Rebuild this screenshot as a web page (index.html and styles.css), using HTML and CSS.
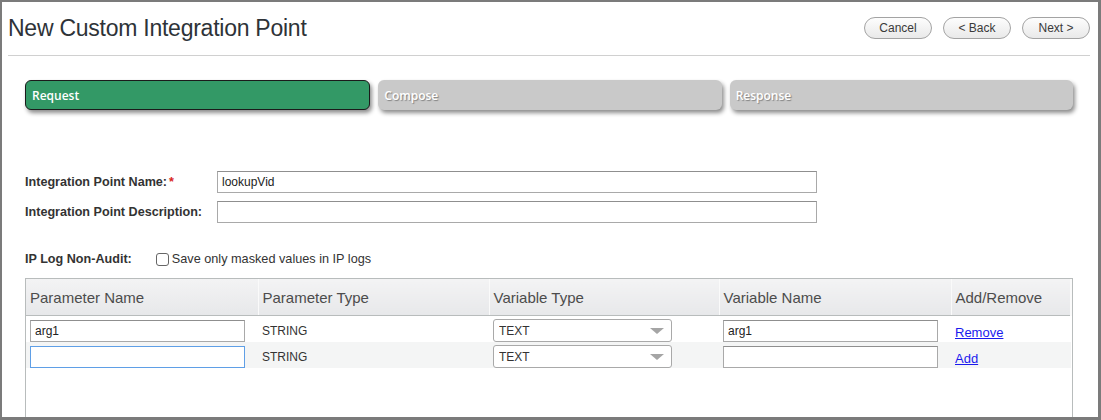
FILE: index.html
```html
<!DOCTYPE html>
<html>

<head>
  <title>New Custom Integration Point</title>
  <link rel="stylesheet" href="styles.css">
</head>

<body>
  <div class="frame">
    <header class="page-head">
      <h1>New Custom Integration Point</h1>
      <div class="actions">
        <button class="pill">Cancel</button>
        <button class="pill">&lt; Back</button>
        <button class="pill">Next &gt;</button>
      </div>
    </header>

    <div class="content">
      <ol class="steps">
        <li class="step current">Request</li>
        <li class="step">Compose</li>
        <li class="step">Response</li>
      </ol>

      <div class="form">
        <div class="field">
          <label>Integration Point Name:<span class="req">*</span></label>
          <input class="text wide" value="lookupVid">
        </div>
        <div class="field">
          <label>Integration Point Description:</label>
          <input class="text wide">
        </div>
        <div class="field audit">
          <label class="short">IP Log Non-Audit:</label>
          <input type="checkbox" class="check" id="masked">
          <label class="plain" for="masked">Save only masked values in IP logs</label>
        </div>
      </div>

      <div class="grid-wrap">
        <table class="params">
          <colgroup>
            <col style="width: 232px">
            <col style="width: 231px">
            <col style="width: 230px">
            <col style="width: 232px">
            <col>
          </colgroup>
          <thead>
            <tr>
              <th>Parameter Name</th>
              <th>Parameter Type</th>
              <th>Variable Type</th>
              <th>Variable Name</th>
              <th>Add/Remove</th>
            </tr>
          </thead>
          <tbody>
            <tr>
              <td><input class="text cell-input" value="arg1"></td>
              <td>STRING</td>
              <td class="select-cell">
                <div class="select"><select><option>TEXT</option></select></div>
              </td>
              <td><input class="text cell-input" value="arg1"></td>
              <td class="link-cell"><a href="#">Remove</a></td>
            </tr>
            <tr class="alt">
              <td><input class="text cell-input focused"></td>
              <td>STRING</td>
              <td class="select-cell">
                <div class="select"><select><option>TEXT</option></select></div>
              </td>
              <td><input class="text cell-input"></td>
              <td class="link-cell"><a href="#">Add</a></td>
            </tr>
          </tbody>
        </table>
      </div>
    </div>
  </div>
</body>

</html>
```

FILE: styles.css
```css
html,
body {
  margin: 0;
  height: 100%;
  background: #fff;
}

body {
  font: 12px "Liberation Sans", Arial, sans-serif;
  color: #333;
}

.frame {
  box-sizing: border-box;
  height: 420px;
  border: 2px solid #7b7b7b;
  border-right-width: 3px;
  border-bottom-width: 3px;
  overflow: hidden;
}

/* title bar */

.page-head {
  display: flex;
  align-items: center;
  justify-content: space-between;
  height: 53px;
  margin: 0 8px 0 6px;
  border-bottom: 1px solid #d0d0d0;
}

.page-head h1 {
  margin: 0 0 1px;
  font: 23px "Liberation Sans", Arial, sans-serif;
  letter-spacing: -0.25px;
  color: #2e3338;
}

.actions {
  display: flex;
  gap: 11px;
  margin-bottom: 1px;
}

.pill {
  height: 22px;
  width: 68px;
  padding: 0;
  border: 1px solid #a3a3a3;
  border-radius: 11px;
  background: linear-gradient(#fdfdfd, #e9e9e9);
  font: 12px "Liberation Sans", Arial, sans-serif;
  color: #3a3a3a;
}

.content {
  padding: 24px 25px 0 23px;
}

/* wizard steps */

.steps {
  display: flex;
  gap: 8px;
  margin: 0;
  padding: 0;
  list-style: none;
}

.step {
  flex: 1;
  box-sizing: border-box;
  height: 30px;
  padding: 7px 0 0 6px;
  border-radius: 6px;
  background: #c9c9c9;
  box-shadow: 2px 3px 4px rgba(0, 0, 0, .45);
  font: 600 12px "Open Sans", sans-serif;
  color: #fff;
  text-shadow: 1px 1px 1px rgba(0, 0, 0, .35);
}

.step.current {
  background: #339966;
  border: 1px solid #1b1b1b;
  padding: 6px 0 0 6px;
  text-shadow: none;
}

/* form */

.form {
  margin-top: 61px;
}

.field {
  display: flex;
  align-items: center;
  height: 22px;
  margin-bottom: 8px;
}

.field label {
  width: 192px;
  font-size: 12.6px;
  font-weight: bold;
  color: #333;
}

.req {
  color: #d9261c;
  margin-left: 2px;
}

.text {
  box-sizing: border-box;
  height: 22px;
  padding: 0 4px;
  border: 1px solid #a9a9a9;
  border-top-color: #8f8f8f;
  font: 12px "Liberation Sans", Arial, sans-serif;
  color: #222;
  outline: none;
}

.wide {
  width: 600px;
}

.field.audit {
  margin-top: 25px;
  margin-bottom: 0;
}

.field label.short {
  width: auto;
  margin-right: 24px;
}

.check {
  appearance: none;
  width: 13px;
  height: 13px;
  margin: 0 3px 0 0;
  border: 1px solid #666;
  border-radius: 3px;
  background: #fff;
}

.field label.plain {
  width: auto;
  font-size: 12.7px;
  font-weight: normal;
  color: #333;
}

/* parameter table */

.grid-wrap {
  margin-top: 8px;
  height: 140px;
  border: 1px solid #b8bcbc;
  border-bottom: none;
}

.params {
  width: 1046px;
  table-layout: fixed;
  border-collapse: collapse;
}

.params th {
  height: 36px;
  padding: 0 0 0 4px;
  border-left: 1px solid #fafafa;
  border-bottom: 1px solid #b8bcbc;
  background: linear-gradient(#f3f3f4, #e7e8ea);
  font: 15px "Liberation Sans", Arial, sans-serif;
  text-align: left;
  color: #4c4c4c;
}

.params th:first-child {
  border-left: none;
}

.params th:last-child {
  border-right: 2px solid #fafafa;
}

.params tbody tr {
  height: 26px;
}

.params td {
  padding: 4px 0 0 4px;
  vertical-align: top;
  line-height: 22px;
  color: #333;
}

.params td.select-cell {
  padding-top: 3px;
}

.params tr.alt td {
  background: #f4f5f5;
}

.cell-input {
  width: 215px;
  display: block;
}

.cell-input.focused {
  border: 1px solid #5f9fe6;
}

.select {
  position: relative;
  width: 179px;
}

.select select {
  appearance: none;
  display: block;
  box-sizing: border-box;
  width: 100%;
  height: 23px;
  padding: 0 5px;
  border: 1px solid #a9a9a9;
  border-radius: 3px;
  background: #fff;
  font: 12px "Liberation Sans", Arial, sans-serif;
  color: #333;
}

.select::after {
  content: "";
  position: absolute;
  right: 8px;
  top: 9px;
  border-left: 7px solid transparent;
  border-right: 7px solid transparent;
  border-top: 6px solid #a5a5a5;
}

.params td.link-cell {
  padding-top: 8px;
  line-height: 18px;
}

.link-cell a {
  font-size: 13px;
  color: #1a1aee;
  text-decoration: underline;
}
```
